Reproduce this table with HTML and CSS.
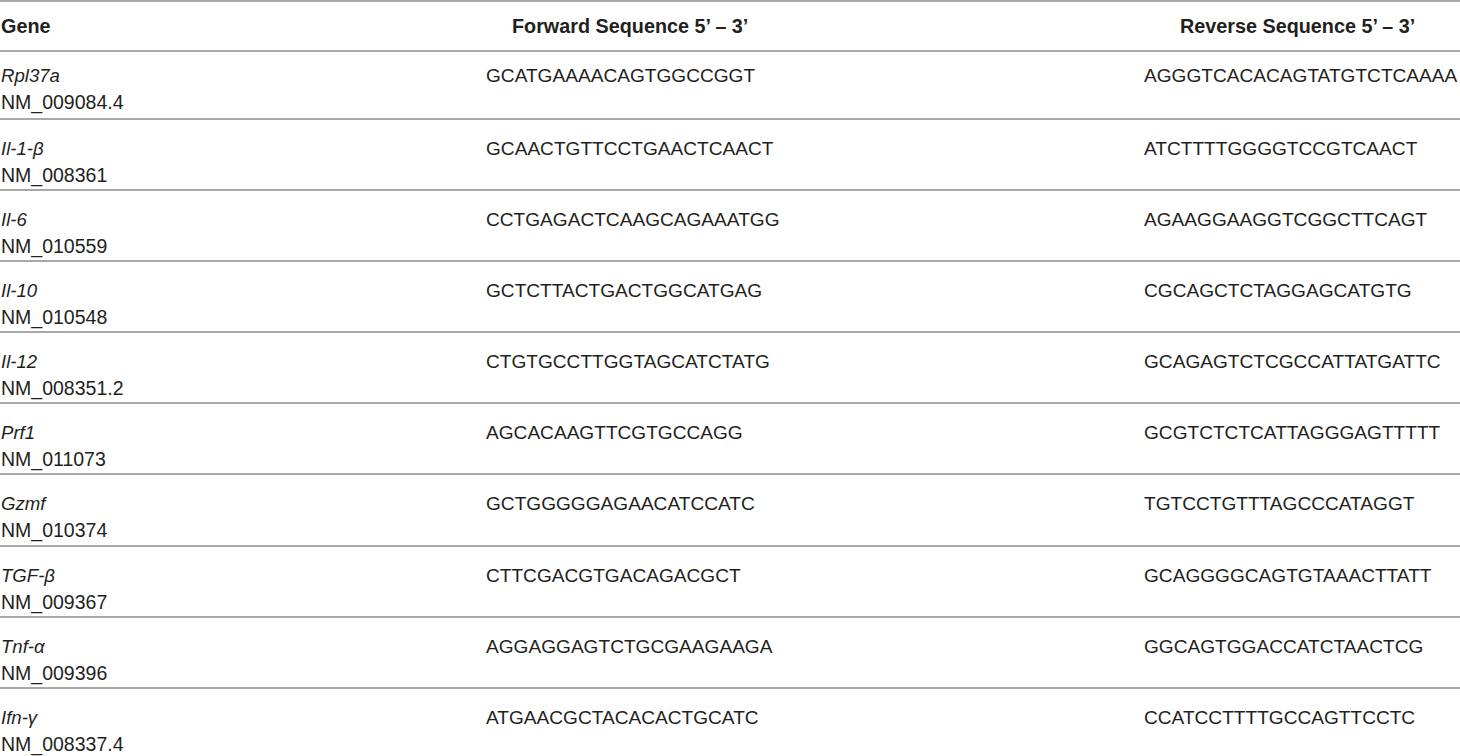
FILE: index.html
```html
<!DOCTYPE html>
<html lang="en">
<head>
<meta charset="utf-8">
<title>Primer sequences</title>
<link rel="stylesheet" href="styles.css">
</head>
<body>
<div class="table">
  <div class="row head">
    <div class="cell gene">Gene</div>
    <div class="cell fwd-head">Forward Sequence 5’ – 3’</div>
    <div class="cell rev-head">Reverse Sequence 5’ – 3’</div>
  </div>
  <div class="row first">
    <div class="cell gene"><div class="gname">Rpl37a</div><div class="acc">NM_009084.4</div></div>
    <div class="cell">GCATGAAAACAGTGGCCGGT</div>
    <div class="cell">AGGGTCACACAGTATGTCTCAAAA</div>
  </div>
  <div class="row">
    <div class="cell gene"><div class="gname">Il-1-β</div><div class="acc">NM_008361</div></div>
    <div class="cell">GCAACTGTTCCTGAACTCAACT</div>
    <div class="cell">ATCTTTTGGGGTCCGTCAACT</div>
  </div>
  <div class="row">
    <div class="cell gene"><div class="gname">Il-6</div><div class="acc">NM_010559</div></div>
    <div class="cell">CCTGAGACTCAAGCAGAAATGG</div>
    <div class="cell">AGAAGGAAGGTCGGCTTCAGT</div>
  </div>
  <div class="row">
    <div class="cell gene"><div class="gname">Il-10</div><div class="acc">NM_010548</div></div>
    <div class="cell">GCTCTTACTGACTGGCATGAG</div>
    <div class="cell">CGCAGCTCTAGGAGCATGTG</div>
  </div>
  <div class="row">
    <div class="cell gene"><div class="gname">Il-12</div><div class="acc">NM_008351.2</div></div>
    <div class="cell">CTGTGCCTTGGTAGCATCTATG</div>
    <div class="cell">GCAGAGTCTCGCCATTATGATTC</div>
  </div>
  <div class="row">
    <div class="cell gene"><div class="gname">Prf1</div><div class="acc">NM_011073</div></div>
    <div class="cell">AGCACAAGTTCGTGCCAGG</div>
    <div class="cell">GCGTCTCTCATTAGGGAGTTTTT</div>
  </div>
  <div class="row">
    <div class="cell gene"><div class="gname">Gzmf</div><div class="acc">NM_010374</div></div>
    <div class="cell">GCTGGGGGAGAACATCCATC</div>
    <div class="cell">TGTCCTGTTTAGCCCATAGGT</div>
  </div>
  <div class="row">
    <div class="cell gene"><div class="gname">TGF-β</div><div class="acc">NM_009367</div></div>
    <div class="cell">CTTCGACGTGACAGACGCT</div>
    <div class="cell">GCAGGGGCAGTGTAAACTTATT</div>
  </div>
  <div class="row">
    <div class="cell gene"><div class="gname">Tnf-α</div><div class="acc">NM_009396</div></div>
    <div class="cell">AGGAGGAGTCTGCGAAGAAGA</div>
    <div class="cell">GGCAGTGGACCATCTAACTCG</div>
  </div>
  <div class="row">
    <div class="cell gene"><div class="gname">Ifn-γ</div><div class="acc">NM_008337.4</div></div>
    <div class="cell">ATGAACGCTACACACTGCATC</div>
    <div class="cell">CCATCCTTTTGCCAGTTCCTC</div>
  </div>
</div>
</body>
</html>
```
FILE: styles.css
```css
html, body {
  margin: 0;
  padding: 0;
  background: #ffffff;
  overflow: hidden;
}

body {
  font-family: "Liberation Sans", Arial, sans-serif;
  font-size: 19.1px;
  line-height: 27px;
  color: #231f20;
}

.table {
  width: 1460px;
  border-top: 2px solid #a8a8a8;
}

.row {
  display: grid;
  grid-template-columns: 486px 658px 1fr;
  box-sizing: border-box;
  height: 71.1px;
  padding-top: 15px;
  border-bottom: 2px solid #a8a8a8;
  white-space: nowrap;
}

.row.head {
  height: 50px;
  padding-top: 11px;
  font-weight: bold;
  font-size: 19.8px;
}

.row.first {
  height: 68px;
  padding-top: 10px;
}

.gene {
  padding-left: 1px;
}

.acc {
  font-size: 19.5px;
}

.fwd-head {
  padding-left: 26px;
}

.rev-head {
  padding-left: 36px;
}

.gname {
  font-style: italic;
  font-size: 18.6px;
}
```
